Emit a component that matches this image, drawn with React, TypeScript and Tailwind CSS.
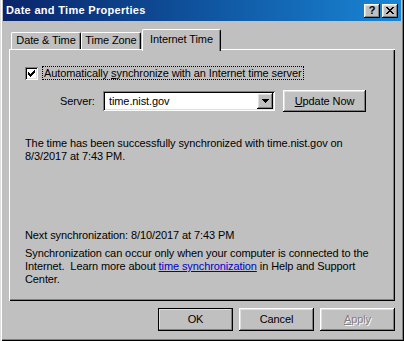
import React from 'react';

const raised =
  'shadow-[inset_-1px_-1px_#000,inset_1px_1px_#fff,inset_-2px_-2px_#808080,inset_2px_2px_#dfdfdf]';

function CheckMark() {
  return (
    <svg width="13" height="13" viewBox="0 0 13 13" className="block">
      <path
        fill="#000"
        d="M3 5h1v3h-1zM4 6h1v3h-1zM5 7h1v3h-1zM6 6h1v3h-1zM7 5h1v3h-1zM8 4h1v3h-1zM9 3h1v3h-1z"
      />
    </svg>
  );
}

function CloseGlyph() {
  return (
    <svg width="8" height="7" viewBox="0 0 8 7" className="block">
      <path
        fill="#000"
        d="M0 0h2v1h-2zM6 0h2v1h-2zM1 1h2v1h-2zM5 1h2v1h-2zM2 2h4v1h-4zM3 3h2v1h-2zM2 4h4v1h-4zM1 5h2v1h-2zM5 5h2v1h-2zM0 6h2v1h-2zM6 6h2v1h-2z"
      />
    </svg>
  );
}

function DownArrow() {
  return (
    <svg width="7" height="4" viewBox="0 0 7 4" className="block">
      <path fill="#000" d="M0 0h7v1h-7zM1 1h5v1h-5zM2 2h3v1h-3zM3 3h1v1h-1z" />
    </svg>
  );
}

function Tab({ label, width, active }: { label: string; width: string; active?: boolean }) {
  return (
    <div
      className={`${width} flex items-start justify-center bg-[#c0c0c0] border-l border-t border-white rounded-tl-[2px] rounded-tr-[2px] shadow-[inset_-1px_0_#808080] border-r border-r-black ${
        active ? 'relative z-10 h-[22px] -mb-[2px] pt-[3px] ml-[1px]' : 'h-[17px] pt-[1px]'
      }`}
    >
      <span className="leading-[13px] whitespace-nowrap">{label}</span>
    </div>
  );
}

function Button({ children, isDefault, disabled }: { children: React.ReactNode; isDefault?: boolean; disabled?: boolean }) {
  return (
    <div
      className={`w-[75px] h-[23px] flex items-center justify-center bg-[#c0c0c0] ${raised} ${
        isDefault ? 'outline outline-1 outline-black -outline-offset-1' : ''
      } ${disabled ? 'text-[#808080] [text-shadow:1px_1px_#fff]' : ''}`}
    >
      {children}
    </div>
  );
}

export default function App() {
  return (
    <div className="w-[404px] h-[341px] bg-[#c0c0c0] text-black text-[11px] leading-[13px] tracking-[-0.1px] font-['Liberation_Sans',Arial,sans-serif] flex flex-col px-[3px] pb-[3px] shadow-[inset_1px_0_#dfdfdf,inset_2px_0_#fff,inset_-1px_-1px_#000,inset_-2px_-2px_#808080]">
      {/* Title bar */}
      <div className="h-[21px] flex items-center justify-between pl-[3px] pr-[3px] bg-gradient-to-r from-[#0a246a] to-[#1a86d6]">
        <span className="text-white font-bold text-[11px] tracking-[0.3px]">Date and Time Properties</span>
        <div className="flex gap-[2px]">
          <div className={`w-[16px] h-[14px] flex items-center justify-center bg-[#c0c0c0] ${raised}`}>
            <span className="font-bold text-[11px] leading-[11px] -mt-[1px]">?</span>
          </div>
          <div className={`w-[16px] h-[14px] flex items-center justify-center bg-[#c0c0c0] ${raised}`}>
            <CloseGlyph />
          </div>
        </div>
      </div>

      <div className="flex flex-col pl-[6px] pr-[6px] pt-[8px]">
        {/* Tabs */}
        <div className="flex items-end h-[20px] pl-[2px]">
          <Tab label="Date & Time" width="w-[70px]" />
          <Tab label="Time Zone" width="w-[60px]" />
          <Tab label="Internet Time" width="w-[79px]" active />
        </div>

        {/* Panel */}
        <div className="w-[386px] h-[252px] flex flex-col pl-[16px] pt-[17px] shadow-[inset_1px_1px_#fff,inset_-1px_-1px_#000,inset_-2px_-2px_#808080]">
          <div className="flex items-center h-[14px]">
            <div className="w-[13px] h-[13px] bg-white shadow-[inset_1px_1px_#808080,inset_-1px_-1px_#fff,inset_2px_2px_#000,inset_-2px_-2px_#dfdfdf]">
              <CheckMark />
            </div>
            <div className="ml-[4px] h-[14px] border border-dotted border-black px-[1px] flex items-center whitespace-pre">
              Automatically <span className="underline">s</span>ynchronize with an Internet time server
            </div>
          </div>

          <div className="flex items-center mt-[10px] h-[22px]">
            <span className="ml-[35px] w-[43px]">Server:</span>
            <div className="w-[172px] h-[20px] bg-white flex items-center justify-between pl-[6px] pr-[2px] shadow-[inset_1px_1px_#808080,inset_-1px_-1px_#fff,inset_2px_2px_#000,inset_-2px_-2px_#dfdfdf]">
              <span>time.nist.gov</span>
              <div className={`w-[16px] h-[16px] flex items-center justify-center bg-[#c0c0c0] ${raised}`}>
                <DownArrow />
              </div>
            </div>
            <div className={`ml-[8px] w-[83px] h-[22px] flex items-center justify-center bg-[#c0c0c0] ${raised}`}>
              <span>
                <span className="underline">U</span>pdate Now
              </span>
            </div>
          </div>

          <p className="mt-[25px]">
            The time has been successfully synchronized with time.nist.gov on
            <br />
            8/3/2017 at 7:43 PM.
          </p>

          <p className="mt-[66px]">Next synchronization: 8/10/2017 at 7:43 PM</p>

          <p className="mt-[5px]">
            Synchronization can occur only when your computer is connected to the
            <br />
            Internet.&nbsp; Learn more about{' '}
            <span className="text-[#0000cc] underline">time synchronization</span> in Help and Support
            <br />
            Center.
          </p>
        </div>

        {/* Buttons */}
        <div className="flex justify-end gap-[6px] mt-[7px] w-[386px]">
          <Button isDefault>OK</Button>
          <Button>Cancel</Button>
          <Button disabled>
            <span>
              <span className="underline">A</span>pply
            </span>
          </Button>
        </div>
      </div>
    </div>
  );
}
